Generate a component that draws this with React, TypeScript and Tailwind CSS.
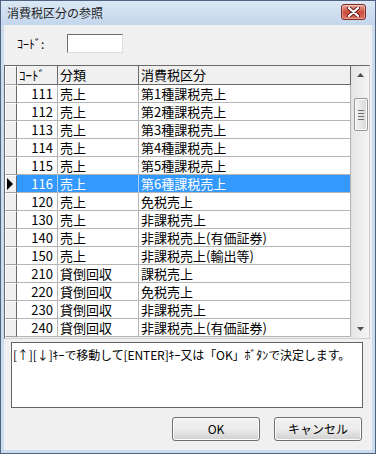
import React from "react";

type Row = { code: string; kind: string; tax: string };

const rows: Row[] = [
  { code: "111", kind: "売上", tax: "第1種課税売上" },
  { code: "112", kind: "売上", tax: "第2種課税売上" },
  { code: "113", kind: "売上", tax: "第3種課税売上" },
  { code: "114", kind: "売上", tax: "第4種課税売上" },
  { code: "115", kind: "売上", tax: "第5種課税売上" },
  { code: "116", kind: "売上", tax: "第6種課税売上" },
  { code: "120", kind: "売上", tax: "免税売上" },
  { code: "130", kind: "売上", tax: "非課税売上" },
  { code: "140", kind: "売上", tax: "非課税売上(有価証券)" },
  { code: "150", kind: "売上", tax: "非課税売上(輸出等)" },
  { code: "210", kind: "貸倒回収", tax: "課税売上" },
  { code: "220", kind: "貸倒回収", tax: "免税売上" },
  { code: "230", kind: "貸倒回収", tax: "非課税売上" },
  { code: "240", kind: "貸倒回収", tax: "非課税売上(有価証券)" },
];

const SELECTED = 5;

const CloseButton = () => (
  <div className="mt-[3px] mr-[9px] w-[25px] h-[16px] rounded-[3px] border border-[#7a2a22] bg-linear-to-b from-[#e8a89c] via-[#cc4a3a] to-[#d9735e] shadow-[inset_0_0_0_1px_rgba(255,255,255,0.35)] flex items-center justify-center">
    <svg width="13" height="10" viewBox="0 0 13 10">
      <path d="M2 1 L11 9 M11 1 L2 9" stroke="#5a1d17" strokeWidth="4" strokeLinecap="round" />
      <path d="M2 1 L11 9 M11 1 L2 9" stroke="#ffffff" strokeWidth="2.2" strokeLinecap="round" />
    </svg>
  </div>
);

const Selector = ({ current }: { current?: boolean }) => (
  <div className="w-[12px] h-full shrink-0 bg-[#f0f0f0] border-t border-l border-t-white border-l-white border-r border-b border-r-[#696969] border-b-[#a0a0a0] flex items-center">
    {current && (
      <svg width="8" height="12" viewBox="0 0 8 12" className="ml-[1px]">
        <polygon points="0,0 6,6 0,12" fill="#000" />
      </svg>
    )}
  </div>
);

const Scrollbar = () => (
  <div className="w-[18px] shrink-0 bg-linear-to-r from-[#e6e6e6] to-[#f4f4f4] border-l border-[#e2e2e2] flex flex-col items-center">
    {/* up arrow */}
    <div className="h-[18px] w-full flex items-center justify-center">
      <svg width="7" height="4" viewBox="0 0 7 4">
        <polygon points="3.5,0 7,4 0,4" fill="#505050" />
      </svg>
    </div>
    {/* thumb */}
    <div className="mt-[14px] w-[14px] h-[33px] rounded-[2px] border border-[#979797] bg-linear-to-r from-[#f3f3f3] to-[#d9d9d9] shadow-[inset_0_0_0_1px_#fbfbfb] flex flex-col items-center justify-center gap-[2px]">
      <div className="w-[6px] h-px bg-[#6f6f6f]" />
      <div className="w-[6px] h-px bg-[#6f6f6f]" />
      <div className="w-[6px] h-px bg-[#6f6f6f]" />
      <div className="w-[6px] h-px bg-[#6f6f6f]" />
    </div>
    <div className="flex-1" />
    {/* down arrow */}
    <div className="h-[18px] w-full flex items-center justify-center">
      <svg width="7" height="4" viewBox="0 0 7 4">
        <polygon points="0,0 7,0 3.5,4" fill="#505050" />
      </svg>
    </div>
  </div>
);

export default function App() {
  return (
    <div className="w-[376px] h-[454px] border border-[#4f6480] bg-[#cbdcef] flex flex-col text-black font-['Noto_Sans_CJK_JP',sans-serif] overflow-hidden">
      {/* Title bar */}
      <div className="h-[24px] shrink-0 flex items-start justify-between bg-linear-to-b from-[#dbe7f4] to-[#c3d6ec]">
        <div className="pl-[6px] pt-[4px] text-[12px] leading-[16px] text-[#1e1e1e]">消費税区分の参照</div>
        <CloseButton />
      </div>

      {/* Client area */}
      <div className="flex-1 mx-[3px] mb-[3px] bg-[#f0f0f0] flex flex-col">
        {/* Code input */}
        <div className="flex items-center pt-[9px] h-[28px]">
          <div className="w-[63px] pl-[13px] text-[12px] leading-[19px]">ｺｰﾄﾞ:</div>
          <div className="w-[56px] h-[19px] bg-white border border-t-[#6d6d6d] border-l-[#6d6d6d] border-r-[#dcdcdc] border-b-[#dcdcdc]" />
        </div>

        {/* Grid */}
        <div className="mt-[12px] w-[366px] h-[274px] border border-t-[#696969] border-l-[#696969] border-r-[#d0d0d0] border-b-[#d0d0d0] flex bg-white">
          <div className="flex-1 flex flex-col text-[13px]">
            {/* Header */}
            <div className="h-[19px] flex bg-[#f0f0f0]">
              <Selector />
              <div className="w-[41px] h-full border-b border-r border-[#696969] border-l border-l-white pl-[1px] leading-[18px]">ｺｰﾄﾞ</div>
              <div className="w-[81px] h-full border-b border-r border-[#696969] pl-[2px] leading-[18px]">分類</div>
              <div className="flex-1 h-full border-b border-r border-[#696969] pl-[2px] leading-[18px]">消費税区分</div>
            </div>
            {rows.map((r, i) => {
              const sel = i === SELECTED;
              return (
                <div key={r.code} className="h-[18px] flex">
                  <Selector current={sel} />
                  <div
                    className={`w-[41px] h-full border-b border-r text-right pr-[4px] leading-[17px] ${
                      sel ? "bg-[#3399ff] text-white border-r-[#a9d0ff] border-b-[#b5b5b5]" : "border-[#b5b5b5]"
                    }`}
                  >
                    {r.code}
                  </div>
                  <div
                    className={`w-[81px] h-full border-b border-r pl-[2px] leading-[17px] ${
                      sel ? "bg-[#3399ff] text-white border-r-[#a9d0ff] border-b-[#b5b5b5]" : "border-[#b5b5b5]"
                    }`}
                  >
                    {r.kind}
                  </div>
                  <div
                    className={`flex-1 h-full border-b border-r pl-[2px] leading-[17px] whitespace-nowrap ${
                      sel ? "bg-[#3399ff] text-white border-b-[#b5b5b5] border-r-[#b5b5b5]" : "border-[#b5b5b5]"
                    }`}
                  >
                    {r.tax}
                  </div>
                </div>
              );
            })}
            <div className="flex-1 bg-[#f0f0f0]" />
          </div>
          <Scrollbar />
        </div>

        {/* Message */}
        <div className="mt-[3px] ml-[7px] w-[352px] h-[66px] bg-white border border-[#646464] pl-[1px] pt-[3px] text-[12px] tracking-[-0.1px] leading-[18px] whitespace-nowrap">
          [↑][↓]ｷｰで移動して[ENTER]ｷｰ又は「OK」ﾎﾞﾀﾝで決定します。
        </div>

        {/* Buttons */}
        <div className="mt-[9px] flex justify-end gap-[14px] pr-[10px]">
          <button className="w-[88px] h-[24px] rounded-[3px] border border-[#707070] bg-linear-to-b from-[#f2f2f2] via-[#ebebeb] to-[#d0d0d0] shadow-[inset_0_0_0_1px_#fcfcfc] text-[12px] leading-[20px]">
            OK
          </button>
          <button className="w-[88px] h-[24px] rounded-[3px] border border-[#707070] bg-linear-to-b from-[#f2f2f2] via-[#ebebeb] to-[#d0d0d0] shadow-[inset_0_0_0_1px_#fcfcfc] text-[12px] leading-[20px]">
            キャンセル
          </button>
        </div>
      </div>
    </div>
  );
}
